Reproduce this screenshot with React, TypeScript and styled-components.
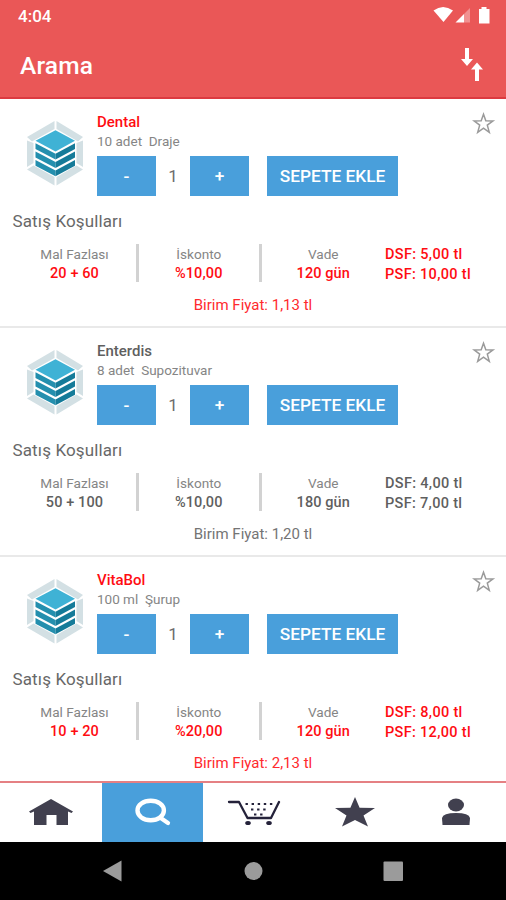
import React from "react";
import styled, { createGlobalStyle } from "styled-components";

const RED = "#ff0c12";
const GREY = "#5f5f5f";

const GlobalStyle = createGlobalStyle`
  * { box-sizing: border-box; }
  body { margin: 0; background: #fff; font-family: Roboto, sans-serif; }
`;

const Screen = styled.main`
  width: 506px;
  height: 900px;
  display: flex;
  flex-direction: column;
  overflow: hidden;
  background: #fff;
`;

const Header = styled.header`
  height: 99px;
  flex: none;
  background: #ea5757;
  border-bottom: 2px solid #dc3a40;
  color: #fff;
`;

const StatusBar = styled.div`
  height: 32px;
  padding: 0 15px 0 18px;
  display: flex;
  align-items: center;
  justify-content: space-between;
  font-size: 17px;
  font-weight: 500;
  line-height: 32px;
`;

const AppBar = styled.div`
  height: 65px;
  padding: 0 22px 0 20px;
  display: flex;
  align-items: center;
  justify-content: space-between;
`;

const Title = styled.h1`
  margin: 3px 0 0;
  font-size: 24.5px;
  font-weight: 500;
  line-height: 30px;
  letter-spacing: 0.2px;
`;

const List = styled.section`
  height: 682px;
  flex: none;
  overflow: hidden;
`;

const Card = styled.article`
  height: 229.2px;
  border-bottom: 2px solid #e9e9e9;
  color: ${GREY};
`;

const Top = styled.div`
  height: 109px;
  display: flex;
`;

const LogoBox = styled.div`
  width: 97px;
  padding: 20px 0 0 25px;
`;

const Info = styled.div`
  flex: 1;
  padding-top: 14px;
`;

const Name = styled.h2<{ $hot: boolean }>`
  margin: 0;
  font-size: 15px;
  font-weight: 500;
  line-height: 19px;
  color: ${(p) => (p.$hot ? RED : GREY)};
`;

const Pack = styled.p`
  margin: 0;
  font-size: 13.5px;
  line-height: 19px;
  color: #858585;
  white-space: pre;
`;

const Actions = styled.div`
  margin-top: 5px;
  display: flex;
  align-items: center;
`;

const BlueButton = styled.button<{ $width: number }>`
  width: ${(p) => p.$width}px;
  height: 40px;
  padding: 0;
  border: 0;
  background: #499fdb;
  color: #fff;
  font: 500 17.3px/41px Roboto, sans-serif;
`;

const Count = styled.span`
  width: 34px;
  text-align: center;
  font-size: 17px;
  color: #6d6d6d;
`;

const Gap = styled.span`
  width: 18px;
`;

const Favourite = styled.div`
  width: 34px;
  padding-top: 12px;
`;

const Conditions = styled.h3`
  margin: 0;
  padding: 3px 0 0 12.5px;
  height: 36px;
  font-size: 17px;
  font-weight: 400;
  line-height: 20px;
  letter-spacing: 0.13px;
  color: #686868;
`;

const Terms = styled.div`
  height: 38px;
  display: grid;
  grid-template-columns: 139px 122.5px 123.5px 1fr;
  grid-template-rows: 38px;
`;

const Term = styled.dl<{ $first?: boolean; $last?: boolean }>`
  margin: 0;
  padding-left: ${(p) => (p.$first ? 13 : 0)}px;
  border-right: ${(p) => (p.$last ? "0" : "3px solid #d2d2d2")};
  text-align: center;
`;

const TermLabel = styled.dt`
  font-size: 13.6px;
  line-height: 20px;
  color: #858585;
`;

const TermValue = styled.dd<{ $hot: boolean }>`
  margin: 0;
  font-size: 14.5px;
  font-weight: 500;
  line-height: 19px;
  letter-spacing: 0.1px;
  color: ${(p) => (p.$hot ? RED : GREY)};
`;

const Prices = styled.div<{ $hot: boolean }>`
  padding-top: 1px;
  font-size: 14.5px;
  font-weight: 500;
  line-height: 20px;
  letter-spacing: 0.32px;
  color: ${(p) => (p.$hot ? RED : GREY)};
`;

const UnitPrice = styled.p<{ $hot: boolean }>`
  margin: 13px 0 0;
  font-size: 15px;
  line-height: 20px;
  text-align: center;
  color: ${(p) => (p.$hot ? "#ff2a2e" : "#747474")};
`;

const Tabs = styled.nav`
  height: 61px;
  flex: none;
  display: grid;
  grid-template-columns: 102px 101px 101px 101px 101px;
  border-top: 2px solid #e58083;
`;

const Tab = styled.div<{ $active?: boolean }>`
  padding-bottom: 2px;
  display: flex;
  justify-content: center;
  align-items: center;
  background: ${(p) => (p.$active ? "#499fdb" : "#fff")};
`;

const SystemBar = styled.footer`
  flex: 1;
  background: #000;
`;

const Logo = () => (
  <svg width="60" height="68" viewBox="0 0 60 68">
    <g fill="#d3e0e4">
      <path d="M29.500 2v8L7 22.500 2 18z" />
      <path d="M31.500 2v8L53 22.500 58 18z" />
      <path d="M2 21.500l6.500 2.500v20L2 48z" />
      <path d="M58 21.500l-6.500 2.500v20l6.500 4z" />
      <path d="M2 50.500l6.500-4L29.500 58v8.500z" />
      <path d="M58 50.500l-6.500-4L31.500 58v8.500z" />
    </g>
    {[24.300, 32.600, 40.900].map((y) => (
      <g key={y}>
        <path d={`M10.500 ${y}L30.500 ${y + 10.500}v5.800L10.500 ${y + 5.800}z`} fill="#248fae" />
        <path d={`M50 ${y}L30.500 ${y + 10.500}v5.800L50 ${y + 5.800}z`} fill="#157b99" />
      </g>
    ))}
    <path d="M30.500 11.200L50 21.800 30.500 32.500 10.500 21.800z" fill="#3fb2d5" />
  </svg>
);

const StatusIcons = () => (
  <svg width="58" height="20" viewBox="433 6 58 20" fill="#fff">
    <path d="M433.500 10.500Q443 3.500 453 10.500L443.500 22z" />
    <path d="M455.500 22.500L464 14v8.500z" />
    <path d="M464 14l6-6v14.500h-6z" opacity=".35" />
    <path d="M479 9h2.500V7h5v2h3v14.500H479z" />
  </svg>
);

const SortIcon = () => (
  <svg width="24" height="36" viewBox="460 47 24 36" fill="#fff">
    <path d="M465 48h4v11h4l-6 7-6-7h4z" />
    <path d="M475 81h4V69.500h4l-6-7-6 7h4z" />
  </svg>
);

const OutlineStar = () => (
  <svg width="24" height="24" viewBox="0 0 24 24" fill="none" stroke="#9a9a9a" strokeWidth="1.500">
    <path d="M11.500 3.200l2.300 6.500 7.200.2-5.700 4.200 2 7.200-5.800-4.200-5.800 4.200 2-7.200L2 9.900l7.200-.2z" />
  </svg>
);

const HomeIcon = () => (
  <svg width="44" height="28" viewBox="0 0 44 28" fill="#41404f">
    <path d="M22 1L44 13.500 42.500 15 39 13.500V27H27.500V17h-10v10H5V13.500L1.500 15 0 13.500z" />
  </svg>
);

const SearchIcon = () => (
  <svg width="36" height="28" viewBox="0 0 36 28" fill="none" stroke="#fff">
    <ellipse cx="15.700" cy="12.500" rx="13.200" ry="9.800" strokeWidth="4.400" />
    <path d="M25 19.500l8 5.500" strokeWidth="4.200" strokeLinecap="round" />
  </svg>
);

const CartIcon = () => (
  <svg width="54" height="28" viewBox="0 0 54 28" fill="none" stroke="#24223a">
    <path d="M2 4h10l8.500 16H44L52 4" strokeWidth="2.300" strokeLinecap="round" strokeLinejoin="round" />
    <path d="M18.500 6h28M24 11.500h18M27 16.500h10" strokeWidth="2.200" strokeDasharray="2.400 3.700" />
    <ellipse cx="21" cy="25" rx="2.800" ry="2" fill="#24223a" stroke="none" />
    <ellipse cx="42" cy="25" rx="2.800" ry="2" fill="#24223a" stroke="none" />
  </svg>
);

const StarIcon = () => (
  <svg width="40" height="30" viewBox="0 0 40 30" fill="#41404f">
    <path d="M20 0l4.600 10.700L40 11 28.500 18.500 33 29.500 20 23 7 29.500 11.500 18.500 0 11l15.400-.3z" />
  </svg>
);

const UserIcon = () => (
  <svg width="28" height="28" viewBox="0 0 28 28" fill="#41404f">
    <ellipse cx="14" cy="7" rx="8" ry="6.500" />
    <path d="M.5 27L0 20Q1 15 14 15T28 20l-.5 7z" />
  </svg>
);

const SystemIcons = () => (
  <svg width="506" height="58" viewBox="0 842 506 58" fill="#9b9b9b">
    <path d="M103 871l18.500-10.500v21z" />
    <circle cx="253.500" cy="871" r="9" />
    <rect x="383.500" y="861.500" width="19.500" height="19.500" rx="1" />
  </svg>
);

const products = [
  { name: "Dental", pack: "10 adet  Draje", hot: true, bonus: "20 + 60", discount: "%10,00", due: "120 gün", dsf: "5,00", psf: "10,00", unit: "1,13" },
  { name: "Enterdis", pack: "8 adet  Supozituvar", hot: false, bonus: "50 + 100", discount: "%10,00", due: "180 gün", dsf: "4,00", psf: "7,00", unit: "1,20" },
  { name: "VitaBol", pack: "100 ml  Şurup", hot: true, bonus: "10 + 20", discount: "%20,00", due: "120 gün", dsf: "8,00", psf: "12,00", unit: "2,13" },
];

export default function App() {
  return (
    <Screen>
      <GlobalStyle />
      <Header>
        <StatusBar>
          <span>4:04</span>
          <StatusIcons />
        </StatusBar>
        <AppBar>
          <Title>Arama</Title>
          <SortIcon />
        </AppBar>
      </Header>
      <List>
        {products.map((p) => (
          <Card key={p.name}>
            <Top>
              <LogoBox><Logo /></LogoBox>
              <Info>
                <Name $hot={p.hot}>{p.name}</Name>
                <Pack>{p.pack}</Pack>
                <Actions>
                  <BlueButton $width={59}>-</BlueButton>
                  <Count>1</Count>
                  <BlueButton $width={59}>+</BlueButton>
                  <Gap />
                  <BlueButton $width={131}>SEPETE EKLE</BlueButton>
                </Actions>
              </Info>
              <Favourite><OutlineStar /></Favourite>
            </Top>
            <Conditions>Satış Koşulları</Conditions>
            <Terms>
              <Term $first>
                <TermLabel>Mal Fazlası</TermLabel>
                <TermValue $hot={p.hot}>{p.bonus}</TermValue>
              </Term>
              <Term>
                <TermLabel>İskonto</TermLabel>
                <TermValue $hot={p.hot}>{p.discount}</TermValue>
              </Term>
              <Term $last>
                <TermLabel>Vade</TermLabel>
                <TermValue $hot={p.hot}>{p.due}</TermValue>
              </Term>
              <Prices $hot={p.hot}>
                <div>DSF: {p.dsf} tl</div>
                <div>PSF: {p.psf} tl</div>
              </Prices>
            </Terms>
            <UnitPrice $hot={p.hot}>Birim Fiyat: {p.unit} tl</UnitPrice>
          </Card>
        ))}
      </List>
      <Tabs>
        <Tab><HomeIcon /></Tab>
        <Tab $active><SearchIcon /></Tab>
        <Tab><CartIcon /></Tab>
        <Tab><StarIcon /></Tab>
        <Tab><UserIcon /></Tab>
      </Tabs>
      <SystemBar><SystemIcons /></SystemBar>
    </Screen>
  );
}
